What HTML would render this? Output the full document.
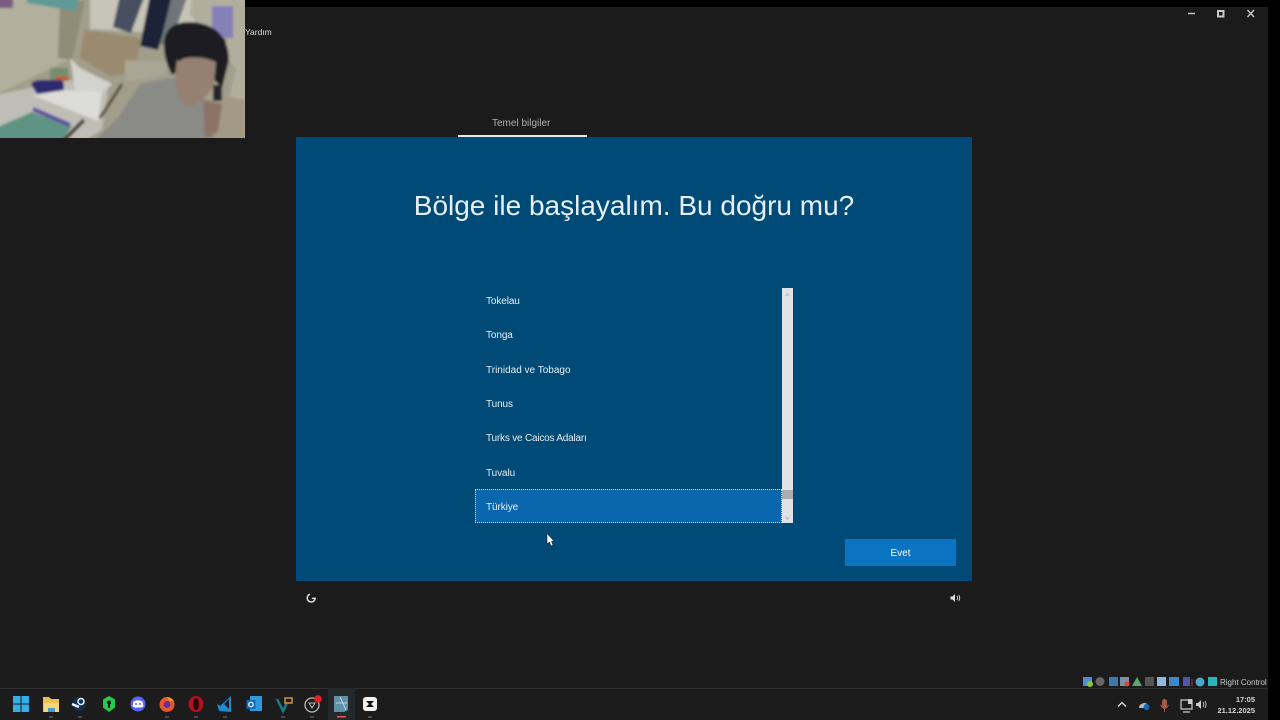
<!DOCTYPE html>
<html lang="tr"><head><meta charset="utf-8"><title>Temel bilgiler</title>
<style>
html,body{margin:0;padding:0;width:1280px;height:720px;overflow:hidden;background:#000}
body{position:relative;font-family:"Liberation Sans",sans-serif;color:#fff}
.a{position:absolute}
#bg{left:0;top:7px;width:1268px;height:681px;background:#1b1b1b}
#bar{left:0;top:688px;width:1268px;height:32px;background:#1c1c1c;border-top:1px solid #333;box-sizing:border-box}
#oobe{left:296px;top:137px;width:676px;height:444px;background:#004a78}
#tabline{left:458px;top:135px;width:129px;height:2px;background:#e8e8e8}
#h{left:296px;top:188px;width:676px;text-align:center;font-size:28px;line-height:36px;color:#e8eff4;font-weight:400}
.i{left:486px;font-size:10px;line-height:14px;color:#e6edf2;white-space:nowrap;letter-spacing:-.1px;filter:blur(.25px)}
#sel{left:475px;top:489px;width:307px;height:34px;box-sizing:border-box;background:#0a67ad;border:1px dotted #cfdfea}
#sb{left:782px;top:288px;width:11px;height:235px;background:#dfe3e6}
#th{left:782px;top:490px;width:11px;height:9px;background:#a9adb0}
#btn{left:845px;top:539px;width:111px;height:27px;background:#0a73c2;text-align:center;font-size:10px;line-height:29px}
svg{position:absolute;overflow:visible}
</style></head><body>
<div class="a" id="bg"></div>
<div class="a" style="left:245px;top:26px;font-size:8.5px;line-height:13px;color:#ddd">Yardım</div>
<div class="a" style="left:492px;top:117px;font-size:10px;line-height:14px;color:#b0b0b0">Temel bilgiler</div>
<div class="a" id="oobe"></div><div class="a" id="tabline"></div>
<div class="a" id="h">Bölge ile başlayalım. Bu doğru mu?</div>
<div class="a i" style="top:295px">Tokelau</div>
<div class="a i" style="top:329px">Tonga</div>
<div class="a i" style="top:364px;letter-spacing:0">Trinidad ve Tobago</div>
<div class="a i" style="top:398px">Tunus</div>
<div class="a i" style="top:432px;letter-spacing:-.2px">Turks ve Caicos Adaları</div>
<div class="a i" style="top:467px">Tuvalu</div>
<div class="a" id="sel"></div>
<div class="a i" style="top:501px">Türkiye</div>
<div class="a" id="sb"></div><div class="a" id="th"></div>
<svg style="left:782px;top:288px" width="11" height="235"><path d="M3.500 8L5.500 6L7.500 8M3.500 229L5.500 231L7.500 229" fill="none" stroke="#b5b9bc"/></svg>
<div class="a" id="btn">Evet</div>
<svg style="left:546px;top:533px" width="9" height="14"><path d="M1 0.500V11L3.400 9L5 13L7 12L5.400 8.400H8.300Z" fill="#fff" stroke="#111" stroke-width=".5"/></svg>
<svg style="left:305px;top:592px" width="12" height="12"><path d="M5 2.200A4 4 0 1 0 10.200 6.400H6.800" fill="none" stroke="#ddd" stroke-width="1.500"/></svg>
<svg style="left:949px;top:592px" width="12" height="12"><path d="M1.500 4.500H3.500L6 2V10L3.500 7.500H1.500Z" fill="#ddd"/><path d="M8 4Q9.300 6 8 8M9.800 3Q11.600 6 9.800 9" stroke="#ccc" fill="none"/></svg>
<svg style="left:1186px;top:8px" width="72" height="12" fill="none" stroke="#c9c9c9" stroke-width="1.400"><path d="M2 5.500H9"/><rect x="32" y="3" width="5.500" height="5.500" stroke-width="2"/><path d="M61.500 2L68 9M68 2L61.500 9"/></svg>
<svg style="left:0;top:0" width="245" height="138" viewBox="0 0 245 138">
<defs><filter id="b" x="-5%" y="-5%" width="110%" height="110%"><feGaussianBlur stdDeviation="1.300"/></filter><clipPath id="c"><rect width="245" height="138"/></clipPath></defs>
<g clip-path="url(#c)"><g filter="url(#b)">
<rect x="-5" y="-5" width="255" height="150" fill="#a19e8b"/>
<path d="M-5 -5H85L72 58L-5 95Z" fill="#b2af9d"/>
<path d="M60 0H85L72 60L58 58Z" fill="#8f8c78"/>
<rect x="-5" y="-5" width="18" height="13" fill="#7a5c80"/><path d="M27 -5H79L76 11L27 3Z" fill="#5e9a96"/>
<path d="M90 -5H195V35L90 29Z" fill="#c6c4b7"/>
<path d="M84 30L140 38L136 72L110 76L80 58Z" fill="#998a6f"/>
<path d="M120 -5H145L131 33L113 27Z" fill="#475060"/><path d="M150 -5H174L158 50L140 46Z" fill="#1f2338"/><path d="M172 -5H188L170 45H160Z" fill="#6f747a"/>
<path d="M192 -5H250V143H218L236 70L220 45L190 15Z" fill="#b2ae9e"/><rect x="212" y="6" width="21" height="32" fill="#8580b8"/>
<path d="M222 95L245 100V143H215Z" fill="#a39a85"/>
<path d="M125 60L168 62L165 75L125 82Z" fill="#aaa696"/>
<path d="M-5 95L70 80L108 88L102 130L80 143H-5Z" fill="#bfbeb6"/>
<path d="M70 58L80 68L112 84L100 95L75 90Z" fill="#d2d2ce"/>
<rect x="50" y="68" width="18" height="12" fill="#758d70"/><rect x="55" y="76" width="14" height="5" fill="#b9623f"/>
<path d="M31 84Q33 79 48 80H62Q66 84 62 98L38 96Z" fill="#2f2b70"/>
<path d="M-5 143V128L32 112L72 126L60 143Z" fill="#5f9484"/><path d="M33 109L70 125" stroke="#5c4ba0" stroke-width="4"/>
<path d="M32 95L98 121L102 92L65 90Z" fill="#dcdcd8"/>
<path d="M92 143L118 118L140 84L170 78L195 85L208 105L215 143Z" fill="#8a8a86"/>
<path d="M100 118L122 84" stroke="#5b4b38" stroke-width="3"/><path d="M64 140L84 120" stroke="#4a4035" stroke-width="4"/>
<path d="M164 45Q164 22 190 22Q228 24 229 60L222 88L205 70L180 70L172 75Q164 60 164 45Z" fill="#1d1b20"/>
<path d="M177 60Q198 54 216 62L214 84Q204 104 187 107Q176 98 175 76Z" fill="#968072"/>
<path d="M178 62Q200 46 222 66L226 40L205 26L180 30Z" fill="#1e1c20"/>
<path d="M203 100L222 104L218 132L205 138Z" fill="#8c7368"/><rect x="213" y="85" width="9" height="16" fill="#26282c"/>
</g></g></svg>
<div class="a" id="bar"></div>
<svg style="left:0;top:688px" width="390" height="32">
<g fill="#35aee8"><rect x="13" y="8" width="7.500" height="7.500"/><rect x="21.500" y="8" width="7.500" height="7.500"/><rect x="13" y="16.500" width="7.500" height="7.500"/><rect x="21.500" y="16.500" width="7.500" height="7.500"/></g>
<path d="M43 9H49L51 11H59V24H43Z" fill="#eec04f"/><rect x="44" y="15" width="15" height="9" fill="#f6d67c"/><rect x="48" y="20" width="7" height="4" fill="#4a9bc6"/>
<circle cx="79" cy="16" r="7" fill="#11304f"/><circle cx="81" cy="13.500" r="3" fill="none" stroke="#eef" stroke-width="1.500"/><path d="M72 16L79 19" stroke="#eef" stroke-width="2.500"/>
<path d="M109 8L115 11.500V19.500L109 24L103 19.500V11.500Z" fill="#27c94e"/><circle cx="109" cy="14.500" r="2" fill="#111"/><rect x="108" y="15" width="2" height="5" fill="#111"/>
<circle cx="138" cy="16" r="7.500" fill="#5865f2"/><path d="M133.500 13.500Q138 11 142.500 13.500L143.500 18.500L141 19.500H135L132.500 18.500Z" fill="#fff"/><circle cx="136" cy="16" r="1" fill="#5865f2"/><circle cx="140" cy="16" r="1" fill="#5865f2"/>
<circle cx="167" cy="16.500" r="7.500" fill="#e9572d"/><path d="M167 9Q174 10 174.500 16Q174 12 170 13Z" fill="#f6a623"/><circle cx="167" cy="16.500" r="3.500" fill="#6a2f9b"/>
<ellipse cx="196" cy="16" rx="7.500" ry="8" fill="#b5101e"/><ellipse cx="196" cy="16" rx="3" ry="6" fill="#260608"/>
<path d="M231 8L220 18L217 15.500L219 23L231 24Z" fill="#1f8ad4"/><path d="M229 11V21L224 16Z" fill="#1c1c1c"/>
<rect x="250" y="8" width="12" height="15" fill="#2c9bdc"/><rect x="246.500" y="12" width="9" height="9" fill="#0f6cbd"/><circle cx="251" cy="16.500" r="2.200" fill="none" stroke="#fff" stroke-width="1.200"/>
<path d="M277 11L283 23L287 15" fill="none" stroke="#15808a" stroke-width="2.500"/><rect x="285" y="10" width="7" height="5" fill="none" stroke="#d09438" stroke-width="1.500"/>
<circle cx="312" cy="17" r="7" fill="#1c1c1c" stroke="#bbb" stroke-width="1.300"/><path d="M309 15L315 15L312 20Z" fill="none" stroke="#bbb"/><circle cx="318" cy="11" r="3.800" fill="#ee1c25"/>
<rect x="328" y="0" width="27" height="32" fill="#25282b"/><path d="M334 8H348V22L344 24H334Z" fill="#5e93aa"/><path d="M340 9L346 22M336 15H347" stroke="#ccd"/><rect x="337" y="28" width="9" height="1.500" fill="#e0565b"/>
<rect x="363" y="9" width="14" height="14" rx="3" fill="#f2f2f2"/><path d="M366 13H374L371 16L374 19H366L369 16Z" fill="#111"/>
<g fill="#777"><rect x="49" y="28.500" width="4" height="1"/><rect x="78" y="28.500" width="4" height="1"/><rect x="165" y="28.500" width="4" height="1"/><rect x="194" y="28.500" width="4" height="1"/><rect x="223" y="28.500" width="4" height="1"/><rect x="281" y="28.500" width="4" height="1"/><rect x="310" y="28.500" width="4" height="1"/><rect x="368" y="28.500" width="4" height="1"/></g>
</svg>
<svg style="left:1082px;top:676px" width="136" height="12">
<rect x="1" y="1" width="9" height="9" fill="#4d8fd0"/><circle cx="8" cy="8" r="3" fill="#8cc63f"/><circle cx="18" cy="5.500" r="4.500" fill="#666"/><rect x="27" y="1" width="9" height="9" fill="#3b79b5"/><rect x="38" y="1" width="9" height="9" fill="#7d8fa8"/><circle cx="45" cy="8" r="2.500" fill="#d9482b"/><path d="M50 10L55 1L60 10Z" fill="#5ba66a"/><rect x="63" y="1" width="9" height="9" fill="#555"/><rect x="75" y="1" width="9" height="9" fill="#8fb8e0"/><rect x="87" y="1" width="10" height="9" fill="#3f87cc"/><rect x="101" y="1" width="7" height="9" fill="#5157a8"/><rect x="109" y="3" width="2" height="7" fill="#6a2a2a"/><circle cx="118" cy="6" r="4.500" fill="#4da8c9"/><rect x="126" y="1" width="9" height="9" fill="#2ab3b8"/>
</svg>
<div class="a" style="left:1220px;top:677px;font-size:8px;line-height:11px;color:#ccc;white-space:nowrap;width:48px;overflow:hidden">Right Control</div>
<svg style="left:1115px;top:696px" width="95" height="18">
<path d="M3 10.500L7 6.500L11 10.500" fill="none" stroke="#ddd" stroke-width="1.300"/>
<path d="M24 12Q24 8 29 7Q33 7 33 10L31 12Z" fill="#bbb"/><circle cx="31.500" cy="11" r="3" fill="#1668b8"/>
<rect x="47" y="3" width="5" height="9" rx="2.500" fill="#a65a44"/><path d="M45.500 9Q49.500 16 53.500 9M49.500 13V16" stroke="#a65a44" fill="none"/>
<path d="M66 4H77V13H66ZM68 16H75" fill="none" stroke="#ccc" stroke-width="1.200"/><rect x="73" y="3" width="4" height="5" fill="#ccc"/>
<path d="M81 7H83L86 4V13L83 10H81Z" fill="#ccc"/><path d="M88 6Q89.500 8.500 88 11M90 5Q92 8.500 90 12" fill="none" stroke="#bbb"/>
</svg>
<div class="a" style="left:1200px;top:694px;width:55px;text-align:right;font-size:7.500px;line-height:11px;color:#d5d5d5;font-weight:700">17:05<br>21.12.2025</div>
</body></html>
